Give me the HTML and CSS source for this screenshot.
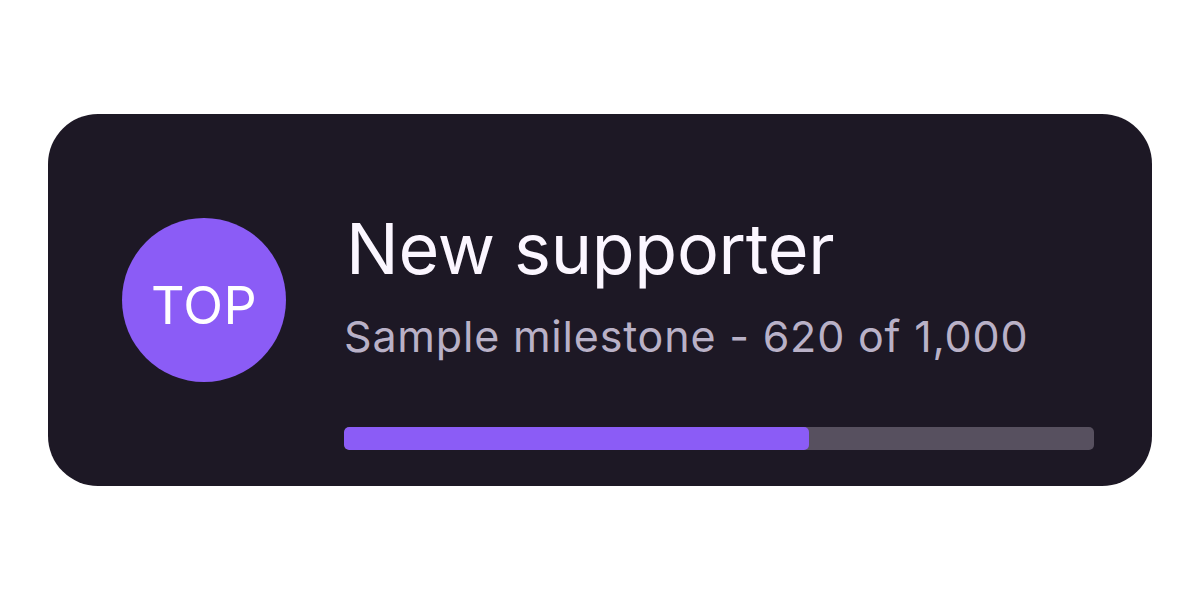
FILE: index.html
```html
<!DOCTYPE html>
<html lang="en">
<head>
<meta charset="utf-8">
<title>New supporter</title>
<link rel="stylesheet" href="styles.css">
</head>
<body>
<div class="stage">
  <div class="card">
    <div class="badge"><span class="badge-text">TOP</span></div>
    <div class="content">
      <div class="title">New supporter</div>
      <div class="subtitle">Sample milestone - 620 of 1,000</div>
      <div class="track"><div class="fill" style="width: 62%"></div></div>
    </div>
  </div>
</div>
</body>
</html>
```
FILE: styles.css
```css
html, body {
  margin: 0;
  padding: 0;
  background: #ffffff;
}
.stage {
  width: 1200px;
  height: 600px;
  padding: 114px 48px 0 48px;
  box-sizing: border-box;
  font-family: Inter, "Liberation Sans", sans-serif;
}
.card {
  height: 372px;
  background: #1d1825;
  border-radius: 50px;
  display: flex;
  align-items: center;
  padding: 36px 58px 36px 74px;
  box-sizing: border-box;
  gap: 58px;
}
.badge {
  flex: 0 0 164px;
  height: 164px;
  border-radius: 50%;
  background: #8b5cf6;
  display: flex;
  align-items: center;
  justify-content: center;
  padding-top: 12px;
  box-sizing: border-box;
}
.badge-text {
  color: #ffffff;
  font-size: 52px;
  line-height: 1;
  letter-spacing: 0.3px;
}
.content {
  align-self: flex-end;
  flex: 1;
  display: flex;
  flex-direction: column;
}
.title {
  color: #fbf6ff;
  font-size: 70px;
  line-height: 1;
  letter-spacing: -0.3px;
  padding-left: 2px;
}
.subtitle {
  margin-top: 31px;
  color: #b9b1c7;
  font-size: 43px;
  line-height: 1;
  letter-spacing: 0.8px;
}
.track {
  margin-top: 69px;
  height: 23px;
  border-radius: 5px;
  background: #57505f;
  overflow: hidden;
}
.fill {
  height: 100%;
  background: #8b5cf6;
  border-radius: 5px;
}
```
